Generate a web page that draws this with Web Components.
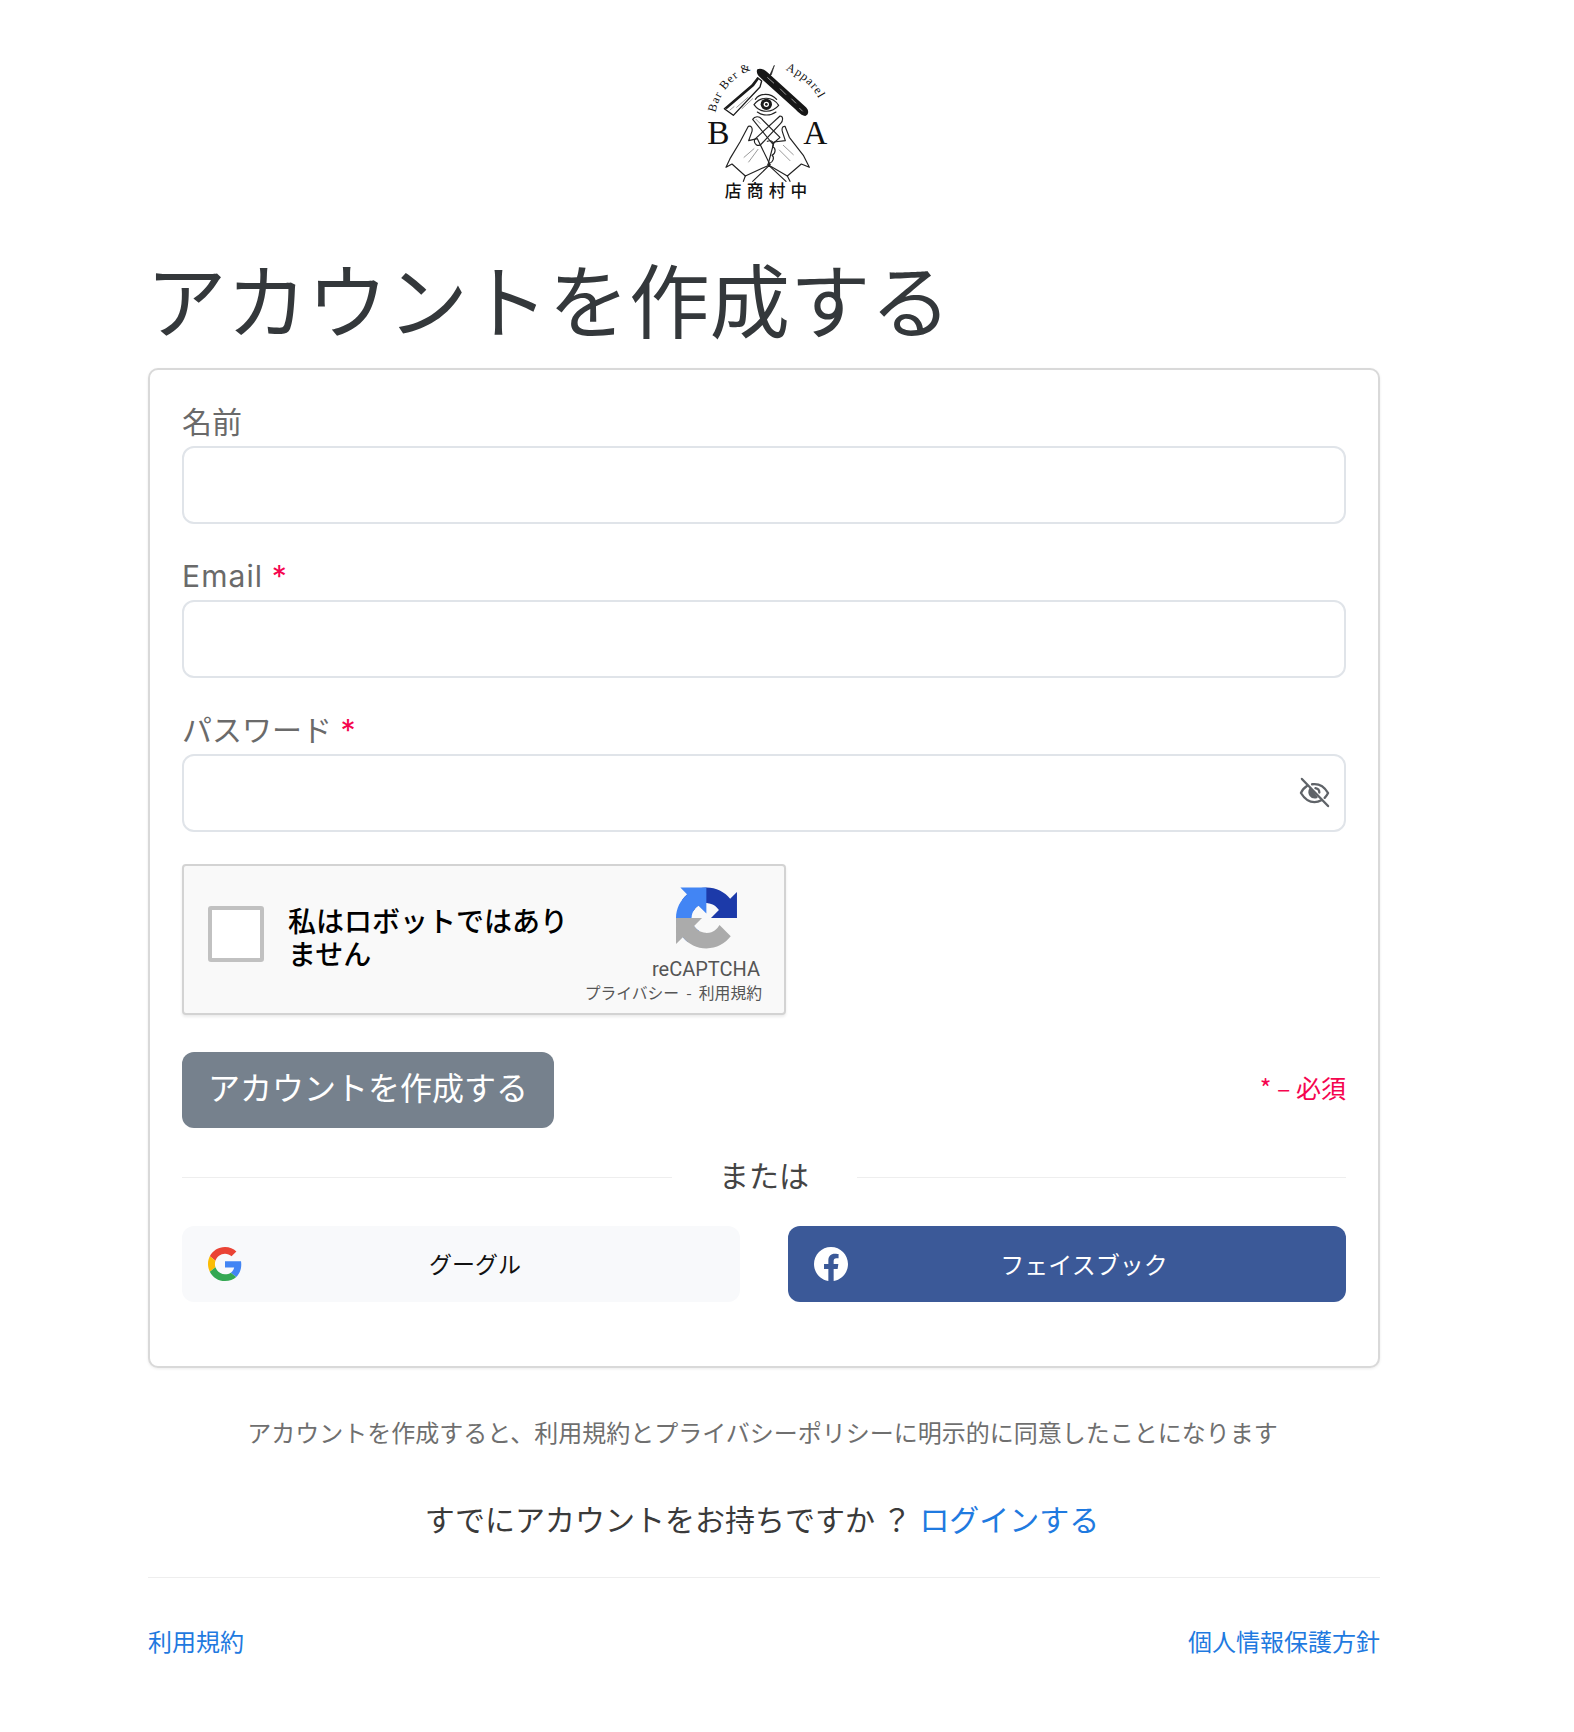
<!DOCTYPE html>
<html lang="ja">
<head>
<meta charset="utf-8">
<title>アカウントを作成する</title>
<style>
  html, body { margin: 0; background: #fff; }
  body { font-family: "Noto Sans CJK JP", "Noto Sans", sans-serif; }
</style>
</head>
<body>
<signup-page></signup-page>

<script>
const FONT = `"Noto Sans CJK JP", "Noto Sans", sans-serif`;

class BrandLogo extends HTMLElement {
    constructor() {
        super();
        this.attachShadow({ mode: 'open' });
        this.shadowRoot.innerHTML = `
            <style>
                :host { display: flex; justify-content: center; padding-left: 12px; height: 180px; }
                svg { width: 180px; height: 180px; display: block; }
                text { fill: #111; }
                .curve { font: 36px "Liberation Serif", serif; letter-spacing: 3px; }
                .big { font: 100px "Liberation Serif", serif; }
                .jp { font: 500 50px "Noto Sans CJK JP", sans-serif; letter-spacing: 16px; }
                .ln { fill: none; stroke: #222; stroke-width: 3.5; stroke-linecap: round; stroke-linejoin: round; }
                .thin { stroke-width: 2; stroke: #666; }
            </style>
            <svg viewBox="0 0 540 540">
                <defs>
                    <path id="arcL" d="M106 212 C118 160 148 114 204 88"/>
                    <path id="arcR" d="M316 84 C372 106 418 150 434 214"/>
                </defs>
                <text class="curve"><textPath href="#arcL">Bar Ber &amp;</textPath></text>
                <text class="curve"><textPath href="#arcR">Apparel</textPath></text>

                <!-- razor -->
                <path d="M133 200 L215 130 L233 107 L245 117 L240 135 L160 220 Z" fill="#fff" stroke="#1a1a1a" stroke-width="4" stroke-linejoin="round"/>
                <path d="M136 198 L215 130 L233 107 L237 111 L222 132 L140 202 Z" fill="#1a1a1a"/>
                <path class="ln thin" d="M170 196 L204 166 M186 200 L218 170 M150 204 L162 194"/>
                <path d="M283 70 L274 98 L268 102 Z" fill="#222" stroke="#222" stroke-width="2"/>
                <path d="M232 82 C244 76 258 86 268 96 L378 196 C388 206 386 218 376 222 C366 222 356 212 346 202 L240 106 C232 98 228 90 232 82 Z" fill="#161616"/>
                <path d="M262 106 L282 124 M300 140 L318 158 M334 170 L348 184 M358 198 L368 208" stroke="#b5b5b5" stroke-width="2.5" fill="none"/>

                <!-- eye -->
                <path class="ln" d="M222 188 C240 164 276 160 296 190 C276 214 240 214 222 188 Z"/>
                <path class="ln" d="M226 172 C240 152 272 152 290 172 M232 210 C248 222 272 222 288 210"/>
                <circle cx="259" cy="187" r="17" fill="#1a1a1a"/>
                <circle cx="259" cy="187" r="8" fill="#fff"/>
                <circle cx="259" cy="187" r="4" fill="#1a1a1a"/>

                <!-- hands -->
                <path class="ln" d="M205 253 C214 250 218 258 216 268 L206 296 L232 290 L270 368 L196 402 L156 366 L138 376 L150 350 L180 300 Z" fill="#fff"/>
                <path class="ln" d="M315 253 C306 252 304 262 308 272 L316 296 L282 300 L264 368 L322 402 L364 366 L388 376 L370 340 L328 286 Z" fill="#fff"/>
                <!-- crossed fingers -->
                <path class="ln" d="M218 232 C224 222 238 222 244 230 L300 286 L278 306 Z" fill="#fff"/>
                <path class="ln" d="M300 222 C310 222 310 236 302 244 L244 306 C234 316 220 306 224 292 Z" fill="#fff"/>
                <path class="ln thin" d="M228 232 L240 244 M288 232 L276 244"/>
                <!-- knuckles -->
                <path class="ln" d="M262 298 C276 292 284 304 278 314 C288 318 288 334 276 340 C284 346 280 360 268 364"/>
                <path class="ln thin" d="M234 322 L206 360 M222 320 L192 346 M298 324 L330 356 M310 310 L340 338"/>
                <path class="ln" d="M196 402 L190 418 M322 402 L330 418 M270 368 L218 418 M264 368 L318 418"/>

                <text class="big" x="82" y="306">B</text>
                <text class="big" x="370" y="306">A</text>
                <text class="jp" x="134" y="464">店商村中</text>
            </svg>
        `;
    }
}

class AppField extends HTMLElement {
    constructor() {
        super();
        this.attachShadow({ mode: 'open' });
    }

    connectedCallback() {
        const mark = this.hasAttribute('required') ? '<span class="req">*</span>' : '';
        const eye = this.hasAttribute('eye') ? `
            <svg class="eye" viewBox="0 0 32 32" fill="none" stroke="#5f6368" stroke-width="2.4" stroke-linecap="round" stroke-linejoin="round">
                <path d="M3 2 L30 30"/>
                <path d="M8.5 9 C5.5 11 3 14 2 16.5 C6 23 11 26 16 26 C18.5 26 21 25.2 23 24"/>
                <path d="M13.5 7.5 C20.5 6.5 26.5 10.5 30 16.5 C29 18.5 28 20 26.5 21.5"/>
                <path d="M11.5 12.5 C9.5 17 12.5 22 18 20.8 Z" fill="#5f6368"/>
                <path d="M17 11.5 C19.5 12 21 14 21 16"/>
            </svg>` : '';
        this.shadowRoot.innerHTML = `
            <style>
                :host { display: block; }
                label { display: block; font-size: 30px; line-height: 41px; color: #6a6a6a; font-family: Inter, ${FONT}; height: 44px; }
                .req { color: #f5054f; }
                .box { position: relative; height: 78px; box-sizing: border-box; border: 2px solid #e0e4e9; border-radius: 12px; background: #fff; }
                .eye { position: absolute; right: 14px; top: 21px; width: 31px; height: 31px; }
                .latin { letter-spacing: 1.1px; }
            </style>
            <label><span class="${this.hasAttribute('latin') ? 'latin' : ''}"><slot></slot></span>${mark ? ' ' + mark : ''}</label>
            <div class="box">${eye}</div>
        `;
    }
}

class RobotCheck extends HTMLElement {
    constructor() {
        super();
        this.attachShadow({ mode: 'open' });
        this.shadowRoot.innerHTML = `
            <style>
                :host { display: block; width: 604px; height: 151px; box-sizing: border-box; background: #f9f9f9; border: 2px solid #d3d3d3; border-radius: 4px; box-shadow: 0 2px 3px rgba(0,0,0,.08); color: #000; }
                .wrap { display: flex; height: 100%; padding: 0 22px 0 24px; box-sizing: border-box; }
                .check { width: 56px; height: 56px; box-sizing: border-box; background: #fff; border: 4px solid #c1c1c1; border-radius: 3px; margin-top: 40px; flex: none; }
                .txt { font-size: 28px; line-height: 33px; font-weight: 500; margin: 38px 0 0 24px; width: 290px; flex: none; }
                .badge { margin-left: auto; padding-top: 21px; display: flex; flex-direction: column; align-items: flex-end; color: #555; }
                .top { width: 118px; margin-right: -3px; display: flex; flex-direction: column; align-items: center; }
                .top svg { width: 61px; height: 62px; display: block; margin-bottom: 8px; }
                .name { font: 20px/24px Roboto, sans-serif; white-space: nowrap; }
                .links { font-size: 15.8px; line-height: 20px; margin-top: 2px; white-space: pre; }
            </style>
            <div class="wrap">
                <div class="check"></div>
                <div class="txt">私はロボットではありません</div>
                <div class="badge">
                    <div class="top">
                        <svg viewBox="0 0 64 64">
                            <path d="M64 31.955l-.033-1.37V4.687l-7.16 7.16C50.948 4.674 42.033.093 32.05.093c-10.4 0-19.622 4.96-25.458 12.64l11.736 11.86a15.55 15.55 0 0 1 4.75-5.33c2.05-1.6 4.952-2.906 8.972-2.906.486 0 .86.057 1.135.163 4.98.393 9.297 3.14 11.84 7.128l-8.307 8.307 26.323.001" fill="#1c3aa9"/>
                            <path d="M31.862.094l-1.37.033H4.594l7.16 7.16C4.58 13.147 0 22.06 0 32.046c0 10.4 4.96 19.622 12.64 25.458L24.5 45.768a15.55 15.55 0 0 1-5.33-4.75c-1.6-2.05-2.906-4.952-2.906-8.972 0-.486.057-.86.163-1.135.393-4.98 3.14-9.297 7.128-11.84l8.307 8.307V.094" fill="#4285f4"/>
                            <path d="M.001 32.045l.033 1.37v25.898l7.16-7.16c5.86 7.173 14.774 11.754 24.76 11.754 10.4 0 19.622-4.96 25.458-12.64L45.676 39.407a15.55 15.55 0 0 1-4.75 5.33c-2.05 1.6-4.952 2.906-8.972 2.906-.486 0-.86-.057-1.135-.163-4.98-.393-9.297-3.14-11.84-7.128l8.307-8.307H.001" fill="#ababab"/>
                        </svg>
                        <div class="name">reCAPTCHA</div>
                    </div>
                    <div class="links">プライバシー  -  利用規約</div>
                </div>
            </div>
        `;
    }
}

class SocialButton extends HTMLElement {
    constructor() {
        super();
        this.attachShadow({ mode: 'open' });
        this.shadowRoot.innerHTML = `
            <style>
                :host { display: flex; align-items: center; height: 76px; box-sizing: border-box; padding: 0 26px; border-radius: 12px; font-size: 24px; background: #f8f9fb; color: #111; }
                :host([variant="facebook"]) { background: #3b5998; color: #fff; }
                ::slotted(svg) { width: 34px; height: 34px; flex: none; }
                .label { flex: 1; text-align: center; padding-bottom: 2px; }
                :host(:not([variant])) .label { font-size: 23px; padding-right: 6px; }
            </style>
            <slot name="icon"></slot>
            <div class="label"><slot></slot></div>
        `;
    }
}

class SignupCard extends HTMLElement {
    constructor() {
        super();
        this.attachShadow({ mode: 'open' });
        this.shadowRoot.innerHTML = `
            <style>
                :host { display: block; box-sizing: border-box; height: 1000px; padding: 32px 32px 0; border: 2px solid #d9d9d9; border-radius: 10px; box-shadow: 0 1px 3px rgba(0,0,0,.08); background: #fff; }
                app-field { margin-bottom: 32px; }
                .actions { display: flex; justify-content: space-between; align-items: center; margin-top: 37px; }
                .submit { width: 372px; height: 76px; box-sizing: border-box; padding-bottom: 8px; border-radius: 12px; background: #76818d; color: #fff; font-size: 32px; display: flex; align-items: center; justify-content: center; }
                .need { color: #f5054f; font-size: 25px; padding-bottom: 6px; }
                .or { display: flex; align-items: center; margin: 25px 0 31px; color: #444; font-size: 30px; line-height: 42px; }
                .or i { flex: 1; height: 1px; background: #eee; margin-top: 6px; }
                .or span { width: 185px; text-align: center; }
                .social { display: grid; grid-template-columns: 558px 558px; justify-content: space-between; }
            </style>
            <app-field>名前</app-field>
            <app-field required latin>Email</app-field>
            <app-field required eye>パスワード</app-field>
            <robot-check></robot-check>
            <div class="actions">
                <div class="submit">アカウントを作成する</div>
                <div class="need">* – 必須</div>
            </div>
            <div class="or"><i></i><span>または</span><i></i></div>
            <div class="social">
                <social-button>
                    <svg slot="icon" viewBox="0 0 48 48">
                        <path fill="#EA4335" d="M24 9.5c3.54 0 6.71 1.22 9.21 3.6l6.85-6.85C35.9 2.38 30.47 0 24 0 14.62 0 6.51 5.38 2.56 13.22l7.98 6.19C12.43 13.72 17.74 9.5 24 9.5z"/>
                        <path fill="#4285F4" d="M46.98 24.55c0-1.57-.15-3.09-.38-4.55H24v9.02h12.94c-.58 2.96-2.26 5.48-4.78 7.18l7.73 6c4.51-4.18 7.09-10.36 7.09-17.65z"/>
                        <path fill="#FBBC05" d="M10.53 28.59c-.48-1.45-.76-2.99-.76-4.59s.27-3.14.76-4.59l-7.98-6.19C.92 16.46 0 20.12 0 24c0 3.88.92 7.54 2.56 10.78l7.97-6.19z"/>
                        <path fill="#34A853" d="M24 48c6.48 0 11.93-2.13 15.89-5.81l-7.73-6c-2.15 1.45-4.92 2.3-8.16 2.3-6.26 0-11.57-4.22-13.47-9.91l-7.98 6.19C6.51 42.62 14.62 48 24 48z"/>
                    </svg>
                    グーグル
                </social-button>
                <social-button variant="facebook">
                    <svg slot="icon" viewBox="0 0 24 24">
                        <path fill="#fff" d="M24 12.07C24 5.4 18.63 0 12 0S0 5.4 0 12.07c0 6.03 4.39 11.02 10.13 11.93v-8.44H7.08v-3.49h3.05V9.41c0-3.02 1.79-4.69 4.53-4.69 1.31 0 2.68.24 2.68.24v2.97h-1.51c-1.49 0-1.96.93-1.96 1.89v2.25h3.33l-.53 3.49h-2.8V24C19.61 23.09 24 18.1 24 12.07z"/>
                    </svg>
                    フェイスブック
                </social-button>
            </div>
        `;
    }
}

class SignupPage extends HTMLElement {
    constructor() {
        super();
        this.attachShadow({ mode: 'open' });
        this.shadowRoot.innerHTML = `
            <style>
                :host { display: block; width: 1232px; margin-left: 148px; padding-top: 42px; padding-bottom: 60px; font-family: ${FONT}; }
                h1 { margin: 14px 0 10px -2px; font-size: 80.5px; line-height: 122px; font-weight: 400; color: #34383b; }
                .terms { margin: 46px 0 0; padding-right: 3px; text-align: center; font-size: 24px; line-height: 36px; color: #6f6f6f; }
                .login { margin: 46px 0 0; padding-right: 4px; text-align: center; font-size: 30px; line-height: 44px; color: #3a3a3a; }
                a { color: #1f7ae0; text-decoration: none; }
                .login a { margin-left: 1px; }
                hr { border: 0; height: 1px; background: #eee; margin: 37px 0 0; }
                footer { display: flex; justify-content: space-between; margin-top: 45px; font-size: 24px; line-height: 36px; }
            </style>
            <brand-logo></brand-logo>
            <h1>アカウントを作成する</h1>
            <signup-card></signup-card>
            <p class="terms">アカウントを作成すると、利用規約とプライバシーポリシーに明示的に同意したことになります</p>
            <p class="login">すでにアカウントをお持ちですか ？ <a href="#">ログインする</a></p>
            <hr>
            <footer><a href="#">利用規約</a><a href="#">個人情報保護方針</a></footer>
        `;
    }
}

customElements.define('brand-logo', BrandLogo);
customElements.define('app-field', AppField);
customElements.define('robot-check', RobotCheck);
customElements.define('social-button', SocialButton);
customElements.define('signup-card', SignupCard);
customElements.define('signup-page', SignupPage);
</script>
</body>
</html>
